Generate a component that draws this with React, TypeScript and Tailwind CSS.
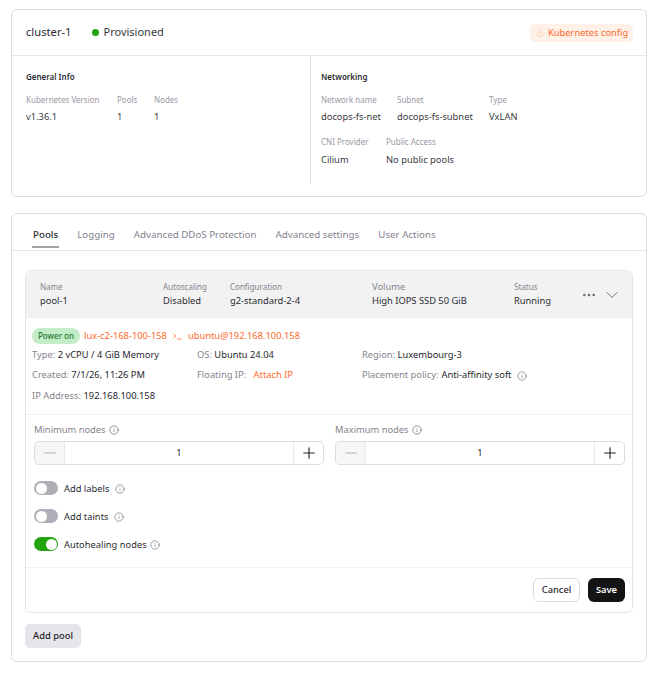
import React from "react";
import { ChevronDown, Download, Ellipsis, Info, Minus, Plus } from "lucide-react";

const Field: React.FC<{ label: string; value: string; gap?: string }> = ({ label, value, gap }) => (
  <div>
    <div className="text-[8px] leading-[12px] text-[#9a98a3]">{label}</div>
    <div className={`${gap ?? "mt-[4px]"} text-[9.33px] leading-[14px] text-[#3a3a40]`}>{value}</div>
  </div>
);

const HeadField: React.FC<{ label: string; value: string; className: string; big?: boolean }> = ({
  label,
  value,
  className,
  big,
}) => (
  <div className={className}>
    <div className={`${big ? "text-[9.33px]" : "text-[8px]"} leading-[12px] text-[#85838d]`}>{label}</div>
    <div className="mt-[1px] text-[9.33px] leading-[14px] text-[#2b2b30]">{value}</div>
  </div>
);

const Detail: React.FC<{ label: string; children: React.ReactNode; className?: string }> = ({
  label,
  children,
  className,
}) => (
  <div className={`text-[9.33px] leading-[20px] whitespace-nowrap text-[#85838d] ${className ?? ""}`}>
    {label} <span className="text-[#26262b]">{children}</span>
  </div>
);

const Stepper: React.FC<{ label: string }> = ({ label }) => (
  <div className="flex-1">
    <div className="flex h-[20px] items-center gap-[3px] text-[9.33px] text-[#85838d]">
      {label}
      <Info className="h-[10px] w-[10px] text-[#55545c]" strokeWidth={1.5} />
    </div>
    <div className="mt-[1px] flex h-[24px] items-center rounded-[5px] border border-[#dcdce0] text-[9.33px] text-[#2b2b30]">
      <div className="flex h-full w-[30px] items-center justify-center rounded-l-[5px] border-r border-[#e8e8eb] bg-[#f6f6f7]">
        <Minus className="h-[18px] w-[18px] text-[#a3a2a8]" strokeWidth={1.1} />
      </div>
      <div className="flex-1 text-center">1</div>
      <div className="flex h-full w-[30px] items-center justify-center border-l border-[#e8e8eb]">
        <Plus className="h-[18px] w-[18px] text-[#202024]" strokeWidth={1.5} />
      </div>
    </div>
  </div>
);

const Toggle: React.FC<{ label: string; on?: boolean; iconGap: string; rowClass: string }> = ({
  label,
  on,
  iconGap,
  rowClass,
}) => (
  <div className={`flex h-[14px] items-center text-[9.33px] text-[#2b2b30] ${rowClass}`}>
    <div
      className={`flex h-[14px] w-[24px] items-center rounded-full px-[1.5px] ${
        on ? "justify-end bg-[#22a50f]" : "justify-start bg-[#b0aeb6]"
      }`}
    >
      <div className="h-[11px] w-[11px] rounded-full bg-white" />
    </div>
    <span className="ml-[6px] pt-[2px]">{label}</span>
    <Info className={`mt-[1px] h-[10px] w-[10px] text-[#6b6a72] ${iconGap}`} strokeWidth={1.5} />
  </div>
);

export default function App() {
  return (
    <div className="h-[674px] bg-white pl-[11px] pr-[10px] pt-[9px] font-['Noto_Sans',sans-serif]">
      <section className="h-[188px] rounded-[6px] border border-[#dcdcdc]">
        <div className="flex h-[46px] items-center justify-between border-b border-[#e6e6e6] pl-[14px] pr-[13px]">
          <div className="flex items-center">
            <span className="text-[11.2px] text-[#2b2b30]">cluster-1</span>
            <span className="ml-[20px] h-[7px] w-[7px] rounded-full bg-[#22a50f]" />
            <span className="ml-[5px] text-[11px] text-[#3a3a40]">Provisioned</span>
          </div>
          <button className="flex h-[18px] w-[103px] items-center gap-[3px] rounded-[5px] bg-[#fff0e8] pl-[6px] text-[9.33px] text-[#ff6a2b]">
            <Download className="h-[9px] w-[9px] text-[#ffc6a8]" strokeWidth={1.5} />
            Kubernetes config
          </button>
        </div>
        <div className="flex">
          <div className="h-[128px] w-[299px] border-r border-[#dcdcdc] pl-[14px] pt-[15px]">
            <h3 className="text-[8px] leading-[12px] font-semibold text-[#2b2b30]">General Info</h3>
            <div className="mt-[11px] flex">
              <div className="w-[91px]"><Field label="Kubernetes Version" value="v1.36.1" /></div>
              <div className="w-[37px]"><Field label="Pools" value="1" /></div>
              <Field label="Nodes" value="1" />
            </div>
          </div>
          <div className="pl-[10px] pt-[15px]">
            <h3 className="text-[8px] leading-[12px] font-semibold text-[#2b2b30]">Networking</h3>
            <div className="mt-[11px] flex">
              <div className="w-[76px]"><Field label="Network name" value="docops-fs-net" /></div>
              <div className="w-[92px]"><Field label="Subnet" value="docops-fs-subnet" /></div>
              <Field label="Type" value="VxLAN" />
            </div>
            <div className="mt-[12px] flex">
              <div className="w-[65px]"><Field label="CNI Provider" value="Cilium" gap="mt-[5px]" /></div>
              <Field label="Public Access" value="No public pools" gap="mt-[5px]" />
            </div>
          </div>
        </div>
      </section>

      <section className="mt-[16px] h-[449px] rounded-[6px] border border-[#dcdcdc]">
        <nav className="flex h-[37px] items-start gap-[19px] border-b border-[#e6e6e6] pl-[21px] pt-[14px] text-[9.75px] leading-[14px] text-[#85838d]">
          <span className="relative font-medium text-[#2b2b30]">
            Pools
            <span className="absolute -inset-x-[1px] top-[18px] h-[2px] bg-[#a3a2a8]" />
          </span>
          <span>Logging</span>
          <span>Advanced DDoS Protection</span>
          <span>Advanced settings</span>
          <span>User Actions</span>
        </nav>

        <div className="mx-[13px] mt-[19px] h-[343px] rounded-[6px] border border-[#e6e6e6]">
          <div className="flex h-[47px] items-center rounded-t-[6px] bg-[#f2f2f3] pl-[14px]">
            <HeadField label="Name" value="pool-1" className="w-[123px]" />
            <HeadField label="Autoscaling" value="Disabled" className="w-[67px]" />
            <HeadField label="Configuration" value="g2-standard-2-4" className="w-[142px]" />
            <HeadField label="Volume" value="High IOPS SSD 50 GiB" className="w-[142px]" big />
            <HeadField label="Status" value="Running" className="w-[67px]" />
            <Ellipsis className="h-[16px] w-[16px] text-[#6b6a72]" strokeWidth={1.75} />
            <ChevronDown className="ml-[5px] h-[20px] w-[20px] text-[#55545c]" strokeWidth={1} />
          </div>

          <div className="h-[97px] border-b border-[#f0f0f1] pl-[6px] pt-[10px]">
            <div className="flex h-[16px] items-center text-[9.33px] text-[#ff6a2b]">
              <span className="flex h-[16px] w-[48px] items-center justify-center rounded-full bg-[#c4ecc9] text-[8px] font-medium text-[#1f7a2d]">
                Power on
              </span>
              <span className="ml-[4px]">lux-c2-168-100-158</span>
              <svg className="ml-[6px] h-[7px] w-[9px]" viewBox="0 0 9 7" fill="none" stroke="currentColor" strokeWidth="0.8">
                <path d="M0.5 1 L3 3 L0.5 5 M4 6 H8.5" />
              </svg>
              <span className="ml-[6px]">ubuntu@192.168.100.158</span>
            </div>
            <div className="mt-[1px] flex h-[20px]">
              <Detail label="Type:" className="w-[165px]">2 vCPU / 4 GiB Memory</Detail>
              <Detail label="OS:" className="w-[165px]">Ubuntu 24.04</Detail>
              <Detail label="Region:">Luxembourg-3</Detail>
            </div>
            <div className="flex h-[20px]">
              <Detail label="Created:" className="w-[165px]">7/1/26, 11:26 PM</Detail>
              <Detail label="Floating IP:" className="w-[165px]">
                <span className="ml-[5px] text-[#ff6a2b]">Attach IP</span>
              </Detail>
              <Detail label="Placement policy:" className="flex items-center gap-[1px]">
                <span className="ml-[2px]">Anti-affinity soft</span>
                <Info className="ml-[6px] inline h-[10px] w-[10px] text-[#6b6a72]" strokeWidth={1.5} />
              </Detail>
            </div>
            <Detail label="IP Address:" className="mt-[1px]">192.168.100.158</Detail>
          </div>

          <div className="h-[153px] border-b border-[#f0f0f1] pl-[8px] pr-[7px] pt-[5px]">
            <div className="flex gap-[11px]">
              <Stepper label="Minimum nodes" />
              <Stepper label="Maximum nodes" />
            </div>
            <Toggle label="Add labels" iconGap="ml-[6px]" rowClass="mt-[16px]" />
            <Toggle label="Add taints" iconGap="ml-[6px]" rowClass="mt-[14px]" />
            <Toggle label="Autohealing nodes" iconGap="ml-[3px]" rowClass="mt-[14px]" on />
          </div>

          <div className="flex justify-end gap-[8px] pr-[7px] pt-[10px]">
            <button className="h-[24px] w-[47px] rounded-[6px] border border-[#dcdcdc] text-[9.33px] font-medium text-[#2b2b30]">
              Cancel
            </button>
            <button className="h-[24px] w-[37px] rounded-[6px] bg-[#141414] text-[9.33px] font-semibold text-white">
              Save
            </button>
          </div>
        </div>

        <button className="ml-[13px] mt-[11px] h-[24px] w-[56px] rounded-[5px] bg-[#e6e5ea] text-[9.33px] font-medium text-[#1f1f24]">
          Add pool
        </button>
      </section>
    </div>
  );
}
